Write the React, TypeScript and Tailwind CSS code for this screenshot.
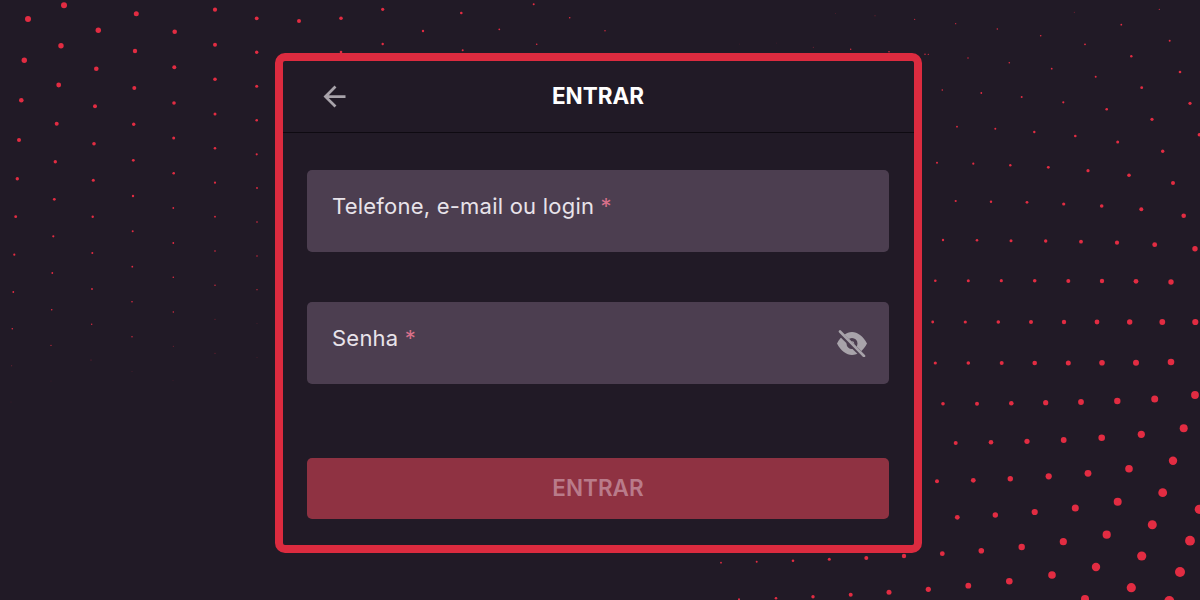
const dots: number[][] = [
// left field
[28,19,3],[24.3,60.3,2.7],[21.3,100.3,2.3],[19,140,2],[17.3,178.7,1.7],[15.7,216.7,1.4],[14.3,254.7,1.1],[13.3,292,.9],[12.3,328.7,.8],
[64,5.3,3],[61,45.7,2.7],[58.7,85,2.4],[56.7,123.7,2],[55.3,161.7,1.7],[54.3,199.3,1.4],[53.3,236.3,1.1],[52.3,273,.9],[51.7,309.7,.8],
[98.3,30.3,2.7],[96.3,68.7,2.3],[95,106.3,2],[94,143.7,1.8],[93.3,180.3,1.5],[92.7,216.7,1.2],[92.3,253,1],[92,289,.9],[91.7,324.3,.7],
[136.3,13.7,2.5],[135,51,2.2],[134.3,88,2],[133.7,124.3,1.7],[133.3,160.3,1.4],[133,196,1.2],[132.7,231.3,1],[132.3,266.7,.9],[132,301.7,.8],[132,336.7,.7],
[174.7,31.7,2.3],[174.3,67.3,2],[174,103,1.8],[173.7,138,1.5],[173.7,173.3,1.3],[173.3,208,.9],[173.3,243,.9],[173.3,277.3,.8],[173.3,312,.7],
[215,9.7,2.1],[215,44.7,2],[215,79.3,1.8],[215,114,1.5],[215,148.3,1.3],[215,182.7,1.1],[215,216.7,.9],[215,251,.8],[215,285.3,.7],[215,319.3,.5],
[256.7,18.3,1.9],[256.7,52.3,1.7],[256.7,86.3,1.5],[256.7,120.3,1.3],[256.7,154.3,1.1],[257,188,.9],[257,222,.8],[257,256,.7],[257,289.7,.6],[257,323.3,.4],
[51,345.3,.6],[91,360,.5],[11.7,365.7,.5],[173.3,346.3,.5],[215,353.3,.5],[257,357.3,.4],[132,371.3,.4],[51,381,.3],[173,380.3,.3],[11,402,.3],
// top strip
[299,21,2],[341,18.3,1.8],[382.7,9.3,1.6],[461.3,13,1.3],[533.7,4.3,1],[569.7,17.7,.8],[423,31,1.2],[499.3,29.3,.9],[382.7,44,1.2],[462.7,50.3,1],[536.7,44.3,.8],[341,52,1.3],
[605,30.7,.7],[835.7,13.3,.4],[875,15.7,.5],[914.7,19.3,.6],[739.3,44,.3],[776.7,43,.3],[813.3,47.3,.5],[850.7,49.3,.7],[889,51.7,.8],[925,54.3,.7],
// right top
[1074.3,12.3,.5],[1159.3,9.3,.6],
[955.7,23.7,.6],[997.3,29,.7],[1040.7,35.7,.8],[1085,44.3,.9],[1121.3,24.7,.9],[1169.7,40.7,1],
[928.3,54.3,.6],[968,58,.7],[1009.3,62.7,.8],[1051.7,68.7,.9],[1095.7,76.7,1],[1131.3,56.3,1.2],[1180,72,1.3],
[942.3,90,.8],[981.3,93,.9],[1021.7,97,1],[1063.3,102.3,1.1],[1106.7,109.3,1.3],[1141.7,87.7,1.4],[1190,103.3,1.6],
[957,126.7,.9],[995.3,128.7,1],[1034.3,132,1.2],[1075.3,136,1.3],[1117.7,142,1.5],[1152,119.3,1.6],[1199.3,134.7,1.7],
[937,162.7,1],[973.3,163.7,1.1],[1010.3,165.3,1.2],[1048.3,167.3,1.4],[1088,170.7,1.6],[1129,175.3,1.8],[1162.7,151.3,1.7],[1173,183,2],
[955.7,201,1.1],[991,201.7,1.2],[1027,202.3,1.4],[1063.7,204,1.6],[1101.7,206,1.8],[1141.3,209.3,2],[1183.7,215.7,2.3],
[943,240,1.2],[977,240.3,1.3],[1011,240.7,1.5],[1045.7,241,1.7],[1081,241.7,1.9],[1117,242.7,2.1],[1154.7,244.7,2.4],[1195,248.7,2.7],
[935.3,280.7,1.3],[968.3,280.7,1.5],[1001.3,280.7,1.6],[1034.7,280.7,1.8],[1068.3,281,2],[1102,281,2.2],[1136,281.3,2.4],[1171,282,2.7],
// right bottom
[932.7,322,1.4],[965.3,322,1.6],[998.3,322,1.8],[1031,322,2],[1064,322,2.2],[1097,322,2.4],[1129.7,322,2.7],[1162.3,322,2.9],[1195.3,322,3.1],
[935.3,363,1.6],[968.3,363,1.8],[1001.7,363,2],[1034.7,363,2.3],[1068.3,363,2.5],[1102,362.7,2.8],[1136,362.7,3],[1171,362,3.3],
[943,403.7,1.8],[977,403.7,2],[1011.3,403.3,2.3],[1045.7,402.7,2.6],[1081,402,2.9],[1117.3,401,3.2],[1154.7,399,3.5],[1195,395,3.9],
[955.7,443,2],[991,442.3,2.3],[1027,441.3,2.6],[1063.7,440,2.9],[1101.7,437.7,3.3],[1141.3,434.3,3.6],[1183.7,428.3,4],
[937,481.3,2],[973.3,480.3,2.4],[1010.3,478.7,2.7],[1048.7,476.3,3.1],[1088,473.3,3.4],[1129,468.7,3.8],[1173,460.7,4.2],
[957.3,517.3,2.4],[995.3,515,2.7],[1034.7,512,3.1],[1075.3,508,3.5],[1117.7,501.7,4],[1162.7,492.7,4.4],[1199.3,509.3,4.6],
[942.3,553.7,2.4],[981.3,550.7,2.8],[1021.7,547,3.2],[1063.3,541.7,3.6],[1106.7,534.7,4.1],[1152.3,524.7,4.5],[1190,540.7,4.9],
[928.3,589.3,2.6],[968.3,585.7,2.9],[1009.3,581.3,3.3],[1052,575,3.8],[1096,567,4.2],[1141.7,556,4.6],[1180,572,5],
[1085,599,4],[1131.3,587.7,4.6],[1169.3,601,5],
// bottom strip
[721,562.7,.9],[756.7,561.7,1],[793,560.7,1.3],[829.3,559.3,1.5],[866.3,558,2],[904,556,2.2],
[739,599.3,1],[776,598.3,1.3],[813,596.7,1.7],[850.7,594.7,2],[889,592.3,2.5],
];

function Field({ label, icon }: { label: string; icon?: boolean }) {
  return (
    <div className="flex h-[82px] items-start justify-between rounded-[5px] bg-[#4c3e50] pl-[25px] pr-[22px]">
      <div className="mt-[21px] text-[22px] leading-[30px] tracking-[0.22px] text-[#e8e3ea]">
        {label} <span className="text-[#d9708a]">*</span>
      </div>
      {icon && (
        <svg viewBox="0 0 30 27" className="mt-[28px] h-[27px] w-[30px]" aria-hidden="true">
          <path
            fillRule="evenodd"
            fill="#a8a3aa"
            d="M0 13.5C4 6 9.5 2 15 2s11 4 15 11.5C26 21 20.5 25 15 25S4 21 0 13.5ZM15 8a5.5 5.5 0 1 0 0 11 5.5 5.5 0 0 0 0-11Z"
          />
          <circle cx="15" cy="13.5" r="2.2" fill="#a8a3aa" />
          <path d="M2 2.5 27 27" stroke="#4c3e50" strokeWidth="4.6" />
          <path d="M3 1.5 27 26" stroke="#a8a3aa" strokeWidth="2.6" strokeLinecap="round" />
        </svg>
      )}
    </div>
  );
}

export default function App() {
  return (
    <div className="relative h-[600px] w-[1200px] overflow-hidden bg-[#211a26] pl-[275px] pt-[53px] font-['Inter',sans-serif]">
      <svg viewBox="0 0 1200 600" className="absolute inset-0 h-[600px] w-[1200px]" aria-hidden="true">
        {dots.map(([x, y, r], i) => (
          <circle key={i} cx={x} cy={y} r={r} fill="#e22c42" opacity={r < 0.6 ? 0.55 : 1} />
        ))}
      </svg>
      <div className="relative h-[500px] w-[647px] rounded-[10px] border-[8px] border-[#dc2b3f] bg-[#211a26]">
        <div className="grid h-[72px] grid-cols-[1fr_auto_1fr] items-center border-b border-[#0e0a11]">
          <svg viewBox="0 0 24 24" className="ml-[35px] mb-[1px] h-[33px] w-[33px]" fill="#a8a3aa" aria-hidden="true">
            <path d="M20 11H7.83l5.59-5.59L12 4l-8 8 8 8 1.41-1.41L7.83 13H20v-2z" />
          </svg>
          <div className="mr-[1px] text-[22.5px] font-bold leading-none text-white">ENTRAR</div>
          <div />
        </div>
        <div className="flex flex-col pl-[24px] pr-[25px] pt-[37px]">
          <Field label="Telefone, e-mail ou login" />
          <div className="mt-[50px]">
            <Field label="Senha" icon />
          </div>
          <button className="mt-[74px] flex h-[61px] items-center justify-center rounded-[5px] bg-[#8f3242] pb-[1px] text-[22.5px] font-semibold text-[#b97b8a]">
            ENTRAR
          </button>
        </div>
      </div>
    </div>
  );
}
